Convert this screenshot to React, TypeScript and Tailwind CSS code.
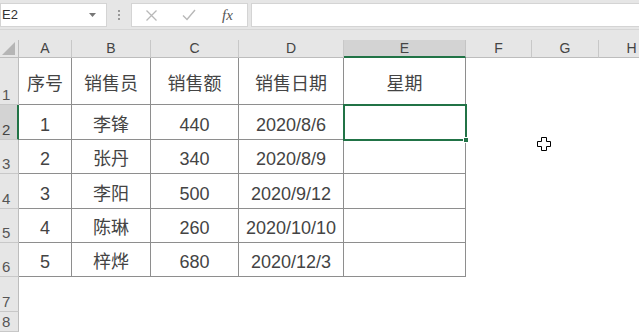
const cols = [
  { key: 'A', w: 53 },
  { key: 'B', w: 79 },
  { key: 'C', w: 88 },
  { key: 'D', w: 105 },
  { key: 'E', w: 122 },
  { key: 'F', w: 66 },
  { key: 'G', w: 67 },
  { key: 'H', w: 66 },
];

const rowHeights = [47, 35, 34, 35, 34, 34, 35, 20];

const data: string[][] = [
  ['序号', '销售员', '销售额', '销售日期', '星期'],
  ['1', '李锋', '440', '2020/8/6', ''],
  ['2', '张丹', '340', '2020/8/9', ''],
  ['3', '李阳', '500', '2020/9/12', ''],
  ['4', '陈琳', '260', '2020/10/10', ''],
  ['5', '梓烨', '680', '2020/12/3', ''],
];

const font = { fontFamily: '"Liberation Sans", "Noto Sans CJK SC", sans-serif' };

function FormulaBar() {
  return (
    <div className="h-[40px] bg-[#e6e6e6] relative">
      <div className="flex h-[30px] pt-[3px] pb-[2px] border-b border-[#d6d6d6]">
        <div className="w-[107px] bg-white border border-[#d4d4d4] flex items-center justify-between pl-[1px] pr-[10px]">
          <span className="text-[13px] text-[#333]">E2</span>
          <svg width="7" height="4" viewBox="0 0 7 4"><path d="M0 0h7L3.5 4z" fill="#777" /></svg>
        </div>
        <div className="w-[24px] flex flex-col items-center justify-center gap-[2px]">
          <span className="w-[2px] h-[2px] bg-[#999]" />
          <span className="w-[2px] h-[2px] bg-[#999]" />
          <span className="w-[2px] h-[2px] bg-[#999]" />
        </div>
        <div className="w-[117px] bg-white border border-[#d4d4d4] flex items-center">
          <svg className="ml-[13px]" width="13" height="13" viewBox="0 0 13 13">
            <path d="M1.5 1.5l10 10M11.5 1.5l-10 10" stroke="#b8b8b8" strokeWidth="1.3" />
          </svg>
          <svg className="ml-[24px]" width="14" height="12" viewBox="0 0 14 12">
            <path d="M1 6.5l4 4L13 1" stroke="#b8b8b8" strokeWidth="1.4" fill="none" />
          </svg>
          <span className="ml-[26px] text-[15px] italic text-[#555]" style={{ fontFamily: '"Liberation Serif", serif' }}>
            fx
          </span>
        </div>
        <div className="w-[3px]" />
        <div className="flex-1 bg-white border border-[#d4d4d4] border-r-0" />
      </div>
    </div>
  );
}

export default function App() {
  return (
    <div className="w-[639px] h-[332px] overflow-hidden bg-white relative" style={font}>
      <FormulaBar />
      <div
        className="grid"
        style={{
          gridTemplateColumns: `19px ${cols.map((c) => c.w + 'px').join(' ')}`,
          gridTemplateRows: `18px ${rowHeights.map((h) => h + 'px').join(' ')}`,
        }}
      >
        {/* corner */}
        <div className="bg-[#e6e6e6] border-r border-b border-[#bdbdbd] relative">
          <svg className="absolute right-[3px] bottom-[2px]" width="13" height="13" viewBox="0 0 13 13">
            <path d="M13 0V13H0z" fill="#b5b5b5" />
          </svg>
        </div>
        {cols.map((c) =>
          c.key === 'E' ? (
            <div key={c.key} className="bg-[#d3d3d3] border-r border-[#c4c4c4] border-b-2 border-b-[#217346] flex items-center justify-center text-[14px] text-[#444] pt-[1px]">
              {c.key}
            </div>
          ) : (
            <div key={c.key} className="bg-[#e6e6e6] border-r border-b border-[#c8c8c8] border-b-[#bdbdbd] flex items-center justify-center text-[14px] text-[#444]">
              {c.key}
            </div>
          )
        )}
        {rowHeights.map((_, r) => (
          <RowCells key={r} r={r} />
        ))}
      </div>

      {/* selected cell E2 */}
      <div className="absolute left-[343px] top-[104px] w-[124px] h-[37px] border-2 border-[#217346]" />
      <div className="absolute left-[463px] top-[137px] w-[6px] h-[6px] bg-[#217346] border border-white" />

      {/* mouse cursor */}
      <svg className="absolute left-[537px] top-[137px]" width="14" height="14" viewBox="0 0 14 14">
        <path
          d="M4.5 0.5h5v4h4v5h-4v4h-5v-4h-4v-5h4z"
          fill="#fff"
          stroke="#000"
          strokeWidth="1"
        />
      </svg>
    </div>
  );
}

function RowCells({ r }: { r: number }) {
  const row = data[r];
  const selected = r === 1;
  return (
    <>
      <div
        className={
          selected
            ? 'bg-[#d3d3d3] border-r-2 border-r-[#217346] border-b border-b-[#c8c8c8] flex items-end pl-[2px] pb-[1px] text-[15px] text-[#444] leading-none'
            : 'bg-[#e6e6e6] border-r border-r-[#bdbdbd] border-b border-b-[#c8c8c8] flex items-end pl-[2px] pb-[1px] text-[15px] text-[#555] leading-none'
        }
      >
        <span className="mb-[1px]">{r + 1}</span>
      </div>
      {cols.map((c, ci) => {
        const inTable = row && ci < 5;
        if (!inTable) {
          return <div key={c.key} className="bg-white" />;
        }
        return (
          <div
            key={c.key}
            className={
              'bg-white border-r border-b border-[#8e8e8e] flex items-center justify-center text-[18px] text-[#444] ' +
              (r === 0 ? 'pt-[6px]' : 'pt-[6px]')
            }
          >
            {row[ci]}
          </div>
        );
      })}
    </>
  );
}
